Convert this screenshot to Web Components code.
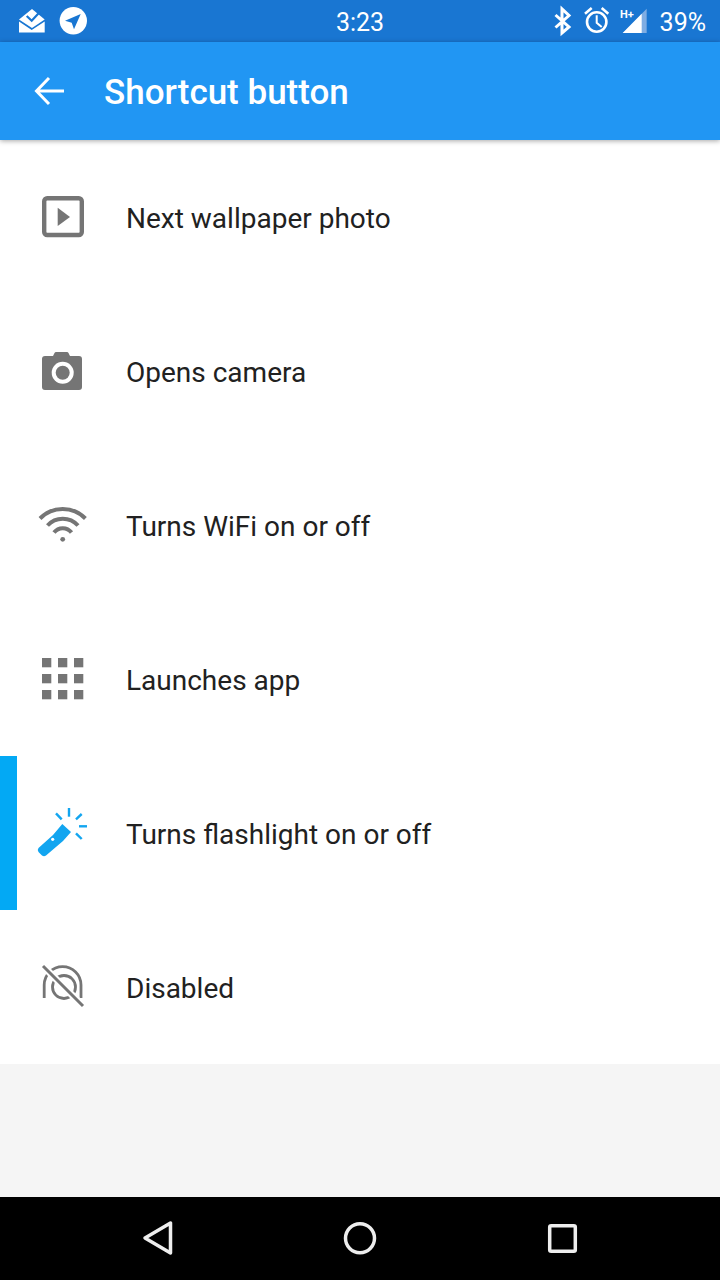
<!DOCTYPE html>
<html>
<head>
<meta charset="utf-8">
<title>Shortcut button</title>
<style>
  html, body { margin: 0; padding: 0; }
  body {
    width: 720px;
    height: 1280px;
    overflow: hidden;
    display: flex;
    flex-direction: column;
    background: #f5f5f5;
    font-family: Roboto, "Liberation Sans", sans-serif;
  }
  shortcut-list { flex: 1; }
  svg[slot="icon"] { display: block; width: 48px; height: 48px; overflow: visible; }
</style>
</head>
<body>
  <status-bar></status-bar>
  <app-bar title="Shortcut button"></app-bar>
  <shortcut-list>
    <shortcut-row>
      <svg slot="icon" viewBox="39 193 48 48">
        <rect x="44.200" y="198.200" width="37.600" height="36.800" rx="3" fill="none" stroke="#757575" stroke-width="4.400"/>
        <polygon points="57.700,207.700 70,217 57.700,226" fill="#757575"/>
      </svg>
      Next wallpaper photo
    </shortcut-row>
    <shortcut-row>
      <svg slot="icon" viewBox="39 347 48 48">
        <path d="M45 356h8l1.500-3q.5-1 1.500-1h11q1 0 1.500 1l1.500 3h9q3 0 3 3v28q0 3-3 3h-34q-3 0-3-3v-28q0-3 3-3z" fill="#757575"/>
        <circle cx="62.700" cy="372.700" r="11" fill="#fff"/>
        <circle cx="62.700" cy="372.700" r="7" fill="#757575"/>
      </svg>
      Opens camera
    </shortcut-row>
    <shortcut-row>
      <svg slot="icon" viewBox="39 501 48 48">
        <g fill="none" stroke="#757575" stroke-width="4">
          <path d="M40 518.500a32 32 0 0 1 45.400 0"/>
          <path d="M47.500 525.500a20.500 20.500 0 0 1 30.500 0"/>
          <path d="M54 532.500a11 11 0 0 1 17.500 0"/>
        </g>
        <circle cx="62.700" cy="539.300" r="2.400" fill="#757575"/>
      </svg>
      Turns WiFi on or off
    </shortcut-row>
    <shortcut-row>
      <svg slot="icon" viewBox="39 655 48 48" fill="#757575">
        <rect x="42" y="658" width="9.300" height="9.300"/>
        <rect x="58" y="658" width="9.300" height="9.300"/>
        <rect x="74" y="658" width="9.300" height="9.300"/>
        <rect x="42" y="674" width="9.300" height="9.300"/>
        <rect x="58" y="674" width="9.300" height="9.300"/>
        <rect x="74" y="674" width="9.300" height="9.300"/>
        <rect x="42" y="690" width="9.300" height="9.300"/>
        <rect x="58" y="690" width="9.300" height="9.300"/>
        <rect x="74" y="690" width="9.300" height="9.300"/>
      </svg>
      Launches app
    </shortcut-row>
    <shortcut-row selected>
      <svg slot="icon" viewBox="39 809 48 48">
        <path d="M62.300 824l8.700 8-8 9-17 14.500q-2 1.500-4 0l-3.500-3.500q-1.500-2 0-4l14.500-13z" fill="#12a5f0"/>
        <circle cx="52.700" cy="839.300" r="1.600" fill="#fff"/>
        <g stroke="#12a5f0" stroke-width="2.400" fill="none">
          <path d="M69 808v8.700"/>
          <path d="M56 813.300l5.700 6"/>
          <path d="M81.700 814l-5.700 5.300"/>
          <path d="M79 826.300h8"/>
          <path d="M76 833.300l5.700 5.700"/>
        </g>
      </svg>
      Turns flashlight on or off
    </shortcut-row>
    <shortcut-row>
      <svg slot="icon" viewBox="39 963 48 48">
        <g fill="none" stroke="#757575" stroke-width="2.800">
          <path d="M44.200 998v-13a18.400 18.400 0 0 1 36.800 0v13"/>
          <circle cx="64" cy="987" r="11.500"/>
        </g>
        <path d="M43 966l40 40" stroke="#fff" stroke-width="7"/>
        <path d="M43 966l40 40" stroke="#757575" stroke-width="3"/>
      </svg>
      Disabled
    </shortcut-row>
  </shortcut-list>
  <nav-bar></nav-bar>

<script>
class StatusBar extends HTMLElement {
  constructor() {
    super();
    this.attachShadow({ mode: 'open' });
    this.shadowRoot.innerHTML = `
      <style>
        :host {
          display: flex;
          flex: none;
          height: 42px;
          background: #1976d2;
          color: #fff;
          font-size: 25px;
        }
        .side { flex: 1; display: flex; align-items: center; }
        .right { justify-content: flex-end; }
        .time { display: flex; align-items: center; padding-top: 2px; }
        .pct { margin-left: 10px; margin-right: 14px; padding-top: 2px; }
        svg { display: block; flex: none; }
        text { font-family: Roboto, "Liberation Sans", sans-serif; font-size: 11px; font-weight: 700; fill: #fff; }
      </style>
      <div class="side">
        <svg width="100" height="42" viewBox="0 0 100 42">
          <path d="M19 19.500L32 9l12.700 10.500L32 28z" fill="#fff"/>
          <path d="M26.700 16l5 4.700 8.300-9" fill="none" stroke="#1976d2" stroke-width="2.200"/>
          <path d="M19 21.500l12.700 8.500 13-8.500v11h-25.700z" fill="#fff"/>
          <circle cx="73.300" cy="20.700" r="13.700" fill="#fff"/>
          <path d="M65 20.700l15.700-6.700-6.700 15.300-2.300-6.600z" fill="#1976d2"/>
        </svg>
      </div>
      <div class="time">3:23</div>
      <div class="side right">
        <svg width="100" height="42" viewBox="550 0 100 42">
          <path d="M555.500 15L569 27l-7 6V9l7 6.500L555.500 27.500" fill="none" stroke="#fff" stroke-width="3"/>
          <circle cx="596.700" cy="22" r="9.700" fill="none" stroke="#fff" stroke-width="2.600"/>
          <path d="M596.700 15.300v7.400l5 4.300" fill="none" stroke="#fff" stroke-width="2"/>
          <path d="M585 13.700L591.700 8M608.300 13.700L601.700 8" fill="none" stroke="#fff" stroke-width="2.600"/>
          <polygon points="622.700,33 646.700,8.700 646.700,33" fill="#7fade3"/>
          <polygon points="622.700,33 641.700,13.800 641.700,33" fill="#fff"/>
          <text x="620" y="18">H+</text>
        </svg>
        <div class="pct">39%</div>
      </div>`;
  }
}

class AppBar extends HTMLElement {
  constructor() {
    super();
    this.attachShadow({ mode: 'open' });
    this.shadowRoot.innerHTML = `
      <style>
        :host {
          display: flex;
          flex: none;
          align-items: center;
          height: 98px;
          background: #2196f3;
          color: #fff;
          box-shadow: 0 1px 5px rgba(0,0,0,.35);
          position: relative;
          z-index: 1;
          padding-left: 34px;
          box-sizing: border-box;
        }
        svg { display: block; flex: none; margin-right: 40px; }
        .title { font-size: 35px; font-weight: 500; padding-top: 2px; }
      </style>
      <svg width="30" height="30" viewBox="0 0 30 30">
        <path d="M30 15H3M15 2L2.500 15 15 28" fill="none" stroke="#fff" stroke-width="3"/>
      </svg>
      <div class="title"></div>`;
    this.shadowRoot.querySelector('.title').textContent = this.getAttribute('title');
  }
}

class ShortcutList extends HTMLElement {
  constructor() {
    super();
    this.attachShadow({ mode: 'open' });
    this.shadowRoot.innerHTML = `
      <style>
        :host { display: block; }
        .rows { display: flex; flex-direction: column; background: #fff; }
      </style>
      <div class="rows"><slot></slot></div>`;
  }
}

class ShortcutRow extends HTMLElement {
  constructor() {
    super();
    this.attachShadow({ mode: 'open' });
    this.shadowRoot.innerHTML = `
      <style>
        :host {
          display: flex;
          align-items: center;
          gap: 39px;
          height: 154px;
          padding-left: 39px;
          box-sizing: border-box;
          position: relative;
          color: #212121;
          font-size: 28px;
          background: #fff;
        }
        :host([selected])::before {
          content: "";
          position: absolute;
          left: 0;
          top: 0;
          bottom: 0;
          width: 17px;
          background: #03a9f4;
        }
        .icon { width: 48px; height: 48px; flex: none; }
        .label { padding-top: 2px; }
      </style>
      <div class="icon"><slot name="icon"></slot></div>
      <div class="label"><slot></slot></div>`;
  }
}

class NavBar extends HTMLElement {
  constructor() {
    super();
    this.attachShadow({ mode: 'open' });
    this.shadowRoot.innerHTML = `
      <style>
        :host { display: block; flex: none; height: 83px; background: #000; }
        svg { display: block; }
      </style>
      <svg width="720" height="83" viewBox="0 1197 720 83" fill="none" stroke="#eee" stroke-width="3.500" stroke-linejoin="round">
        <path d="M145 1238l25.500-15v30z"/>
        <circle cx="360" cy="1238.300" r="14.500"/>
        <rect x="549.700" y="1225.700" width="25.600" height="25.600" rx="1.500"/>
      </svg>`;
  }
}

customElements.define('status-bar', StatusBar);
customElements.define('app-bar', AppBar);
customElements.define('shortcut-list', ShortcutList);
customElements.define('shortcut-row', ShortcutRow);
customElements.define('nav-bar', NavBar);
</script>
</body>
</html>
